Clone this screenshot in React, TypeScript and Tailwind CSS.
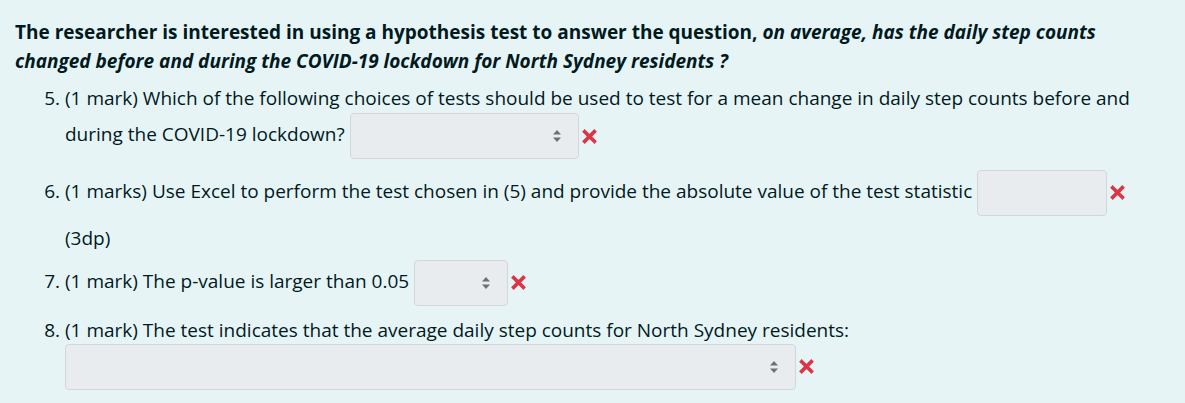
import React from "react";

// ─── Bits ──────────────────────────────────────────────────────────────────────

function Arrows() {
  return (
    <svg width="10" height="14" viewBox="0 0 10 14" className="shrink-0">
      <path d="M5 1 L9 5.5 L1 5.5 Z" fill="#6a7178" />
      <path d="M5 13 L9 8.5 L1 8.5 Z" fill="#6a7178" />
    </svg>
  );
}

function Cross() {
  return (
    <svg width="15" height="15" viewBox="0 0 14 14" className="inline-block align-middle ml-[3px]">
      <path d="M2.5 2.5 L11.5 11.5 M11.5 2.5 L2.5 11.5" stroke="#dc3545" strokeWidth="3.4" strokeLinecap="square" />
    </svg>
  );
}

function Select({ width, arrows = true }: { width: number; arrows?: boolean }) {
  return (
    <span
      className="inline-flex items-center justify-end align-middle h-[46px] rounded-[4px] border border-[#d3d7db] bg-[#e9ecef] pr-[16px]"
      style={{ width }}
    >
      {arrows && <Arrows />}
    </span>
  );
}

// ─── Page ──────────────────────────────────────────────────────────────────────

export default function App() {
  return (
    <div
      className="w-[1185px] h-[403px] bg-[#e7f4f6] text-[#001a1e] overflow-hidden"
      style={{ fontFamily: '"Open Sans", "Noto Sans", sans-serif' }}
    >
      <div className="pt-[18px] pl-[15px] pr-[40px]">
        <p className="text-[19px] font-bold leading-[29px]">
          The researcher is interested in using a hypothesis test to answer the question,{" "}
          <em>
            on average, has the daily step counts changed before and during the COVID-19 lockdown for
            North Sydney residents ?
          </em>
        </p>

        <ol start={5} className="list-decimal pl-[50px] text-[19px] leading-[30px] mt-[7px]">
          <li className="mb-[10px]">
            (1 mark) Which of the following choices of tests should be used to test for a mean change in
            daily step counts before and during the COVID-19 lockdown? <Select width={229} />
            <Cross />
          </li>
          <li className="leading-[44px]">
            (1 marks) Use Excel to perform the test chosen in (5) and provide the absolute value of the
            test statistic <Select width={130} arrows={false} />
            <Cross /> (3dp)
          </li>
          <li className="mb-[10px]">
            (1 mark) The p-value is larger than 0.05 <Select width={94} />
            <Cross />
          </li>
          <li className="leading-[28px]">
            (1 mark) The test indicates that the average daily step counts for North Sydney residents:
            <br />
            <Select width={731} />
            <Cross />
          </li>
        </ol>
      </div>
    </div>
  );
}
